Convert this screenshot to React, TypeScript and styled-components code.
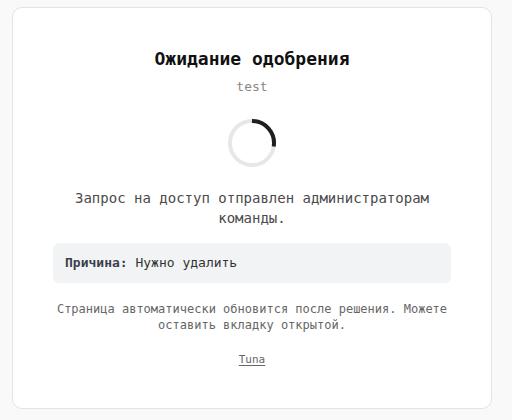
import React from "react";
import styled, { createGlobalStyle } from "styled-components";

const GlobalStyle = createGlobalStyle`
  body {
    margin: 0;
    background: #f9f9f9;
    font-family: "DejaVu Sans Mono", "Liberation Mono", monospace;
  }
`;

const Page = styled.div`
  padding: 7px 20px 12px 12px;
`;

const Card = styled.div`
  background: #fff;
  border: 1px solid #e3e3e3;
  border-radius: 10px;
  padding: 40px;
  display: flex;
  flex-direction: column;
  align-items: center;
  text-align: center;
`;

const Title = styled.h1`
  margin: 0;
  font-size: 18px;
  line-height: 22px;
  font-weight: 700;
  color: #111;
`;

const Team = styled.div`
  margin-top: 8px;
  font-size: 13px;
  line-height: 18px;
  color: #888;
`;

const SpinnerBox = styled.div`
  margin-top: 22px;
  width: 50px;
  height: 50px;
`;

const Message = styled.p`
  margin: 20px 0 0;
  font-size: 14px;
  line-height: 20px;
  color: #4a4a4a;
`;

const Reason = styled.div`
  margin-top: 15px;
  align-self: stretch;
  background: #f2f3f5;
  border-radius: 6px;
  padding: 11px 12px;
  text-align: left;
  font-size: 13px;
  line-height: 18px;
  color: #333;

  b {
    color: #3a3f4a;
  }
`;

const Note = styled.p`
  margin: 18px 0 0;
  font-size: 12px;
  line-height: 16px;
  color: #666;
`;

const TeamLink = styled.a`
  margin-top: 19px;
  font-size: 11px;
  line-height: 16px;
  color: #666;
  text-decoration: underline;
  text-underline-offset: 2px;
`;

const Spinner: React.FC = () => (
  <svg width="50" height="50" viewBox="0 0 50 50">
    <circle cx="25" cy="25" r="22" fill="none" stroke="#e6e7ea" strokeWidth="4" />
    <path
      d="M25 3 A22 22 0 0 1 46.7 28.5"
      fill="none"
      stroke="#1f1f1f"
      strokeWidth="4"
    />
  </svg>
);

export default function App() {
  return (
    <Page>
      <GlobalStyle />
      <Card>
        <Title>Ожидание одобрения</Title>
        <Team>test</Team>
        <SpinnerBox>
          <Spinner />
        </SpinnerBox>
        <Message>
          Запрос на доступ отправлен администраторам
          <br />
          команды.
        </Message>
        <Reason>
          <b>Причина:</b> Нужно удалить
        </Reason>
        <Note>
          Страница автоматически обновится после решения. Можете оставить
          вкладку открытой.
        </Note>
        <TeamLink href="#">Tuna</TeamLink>
      </Card>
    </Page>
  );
}
